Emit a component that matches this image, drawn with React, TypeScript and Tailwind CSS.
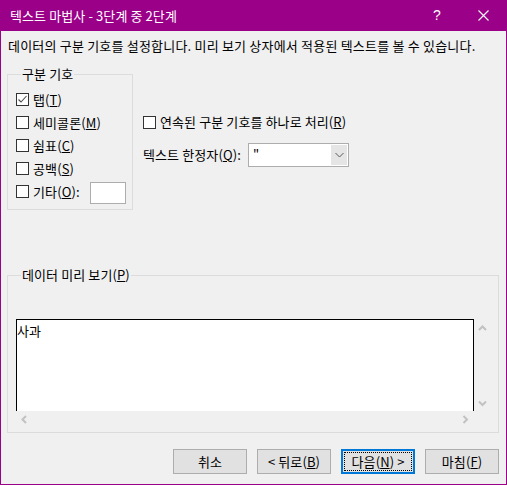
import type { ReactNode } from 'react';

const FONT = "font-['Noto_Sans_CJK_KR','Malgun_Gothic',sans-serif]";

function Check({ checked = false }: { checked?: boolean }) {
  return (
    <span className="w-[13px] h-[13px] border border-[#333333] bg-white flex items-center justify-center shrink-0">
      {checked && (
        <svg width="11" height="11" viewBox="0 0 11 11">
          <polyline points="1.5,5.5 4,8 9.5,2" fill="none" stroke="#4d4d4d" strokeWidth="1.1" />
        </svg>
      )}
    </span>
  );
}

function Key({ k }: { k: string }) {
  return (
    <>
      (<u className="underline-offset-[1px]">{k}</u>)
    </>
  );
}

function CheckRow({ children, checked }: { children: ReactNode; checked?: boolean }) {
  return (
    <div className="flex items-center gap-[4px] h-[23px]">
      <Check checked={checked} />
      <span className="leading-[16px]">{children}</span>
    </div>
  );
}

function Chevron({ dir }: { dir: 'up' | 'down' | 'left' | 'right' }) {
  const pts = {
    up: '1,6 4.5,2.5 8,6',
    down: '1,2.5 4.5,6 8,2.5',
    left: '6,1 2.5,4.5 6,8',
    right: '2.5,1 6,4.5 2.5,8',
  }[dir];
  return (
    <svg width="9" height="9" viewBox="0 0 9 9">
      <polyline points={pts} fill="none" stroke="#c2c2c2" strokeWidth="2" />
    </svg>
  );
}

function Button({ children, focused }: { children: ReactNode; focused?: boolean }) {
  if (focused) {
    return (
      <div className="w-[74px] h-[25px] border-2 border-[#0078d7] bg-[#e1e1e1] p-[1px]">
        <div className="h-full border border-dotted border-black flex items-center justify-center leading-[16px]">
          {children}
        </div>
      </div>
    );
  }
  return (
    <div className="w-[74px] h-[25px] border border-[#adadad] bg-[#e1e1e1] flex items-center justify-center leading-[16px]">
      {children}
    </div>
  );
}

export default function App() {
  return (
    <div className={`w-[507px] h-[485px] flex flex-col bg-[#f0f0f0] text-[13px] tracking-[0.1px] text-black ${FONT}`}>
      {/* Title bar */}
      <div className="h-[31px] bg-[#9b0088] flex items-center text-white shrink-0">
        <span className="pl-[10px] leading-[16px]">텍스트 마법사 - 3단계 중 2단계</span>
        <span className="ml-auto w-[20px] text-center text-[14px] font-['Liberation_Sans',sans-serif] mr-[26px]">?</span>
        <span className="w-[20px] flex justify-center mr-[14px]">
          <svg width="11" height="11" viewBox="0 0 11 11">
            <path d="M0.5 0.5 L10.5 10.5 M10.5 0.5 L0.5 10.5" stroke="white" strokeWidth="1.1" />
          </svg>
        </span>
      </div>

      {/* Body */}
      <div className="flex-1 flex flex-col border-x border-b border-[#9b0088] pl-[6px] pr-[6px]">
        <p className="mt-[7px] pl-[1px] leading-[16px] tracking-[0.2px]">
          데이터의 구분 기호를 설정합니다. 미리 보기 상자에서 적용된 텍스트를 볼 수 있습니다.
        </p>

        <div className="flex mt-[12px]">
          <fieldset className="w-[126px] border border-[#dcdcdc] pl-[8px] pr-[6px] pt-[6px] pb-[6px]">
            <legend className="ml-[5px] px-[1px] leading-[16px]">구분 기호</legend>
            <CheckRow checked>
              탭<Key k="T" />
            </CheckRow>
            <CheckRow>
              세미콜론<Key k="M" />
            </CheckRow>
            <CheckRow>
              쉼표<Key k="C" />
            </CheckRow>
            <CheckRow>
              공백<Key k="S" />
            </CheckRow>
            <div className="flex items-center h-[23px]">
              <Check />
              <span className="ml-[4px] leading-[16px]">
                기타<Key k="O" />:
              </span>
              <div className="ml-auto w-[36px] h-[22px] border border-[#adadad] bg-white mt-[3px]" />
            </div>
          </fieldset>

          <div className="ml-[10px] pt-[48px] flex flex-col">
            <div className="flex items-center gap-[4px] h-[16px]">
              <Check />
              <span className="leading-[16px]">
                연속된 구분 기호를 하나로 처리<Key k="R" />
              </span>
            </div>
            <div className="flex items-center mt-[13px]">
              <span className="w-[105px] leading-[16px]">
                텍스트 한정자<Key k="Q" />:
              </span>
              <div className="w-[101px] h-[24px] border border-[#adadad] bg-white flex">
                <span className="flex-1 pl-[4px] leading-[20px]">"</span>
                <div className="w-[16px] m-[1px] bg-[#e5e5e5] flex items-center justify-center">
                  <svg width="9" height="6" viewBox="0 0 9 6">
                    <polyline points="0.5,1 4.5,5 8.5,1" fill="none" stroke="#5a5a5a" strokeWidth="1" />
                  </svg>
                </div>
              </div>
            </div>
          </div>
        </div>

        <fieldset className="mt-[57px] w-[492px] border border-[#dcdcdc] pl-[8px] pt-[36px] pb-[4px]">
          <legend className="ml-[5px] px-[1px] leading-[16px]">
            데이터 미리 보기<Key k="P" />
          </legend>
          <div className="grid grid-cols-[458px_17px] grid-rows-[92px_17px]">
            <div className="bg-white border-t border-x border-black leading-[16px] pt-[3px]">사과</div>
            <div className="flex flex-col items-center justify-between pt-[5px] pb-[3px]">
              <Chevron dir="up" />
              <Chevron dir="down" />
            </div>
            <div className="flex items-center justify-between px-[4px]">
              <Chevron dir="left" />
              <Chevron dir="right" />
            </div>
            <div />
          </div>
        </fieldset>

        <div className="mt-[16px] flex justify-end gap-[10px] pr-[1px]">
          <Button>취소</Button>
          <Button>
            &lt; 뒤로<Key k="B" />
          </Button>
          <Button focused>
            다음<Key k="N" /> &gt;
          </Button>
          <Button>
            마침<Key k="F" />
          </Button>
        </div>
      </div>
    </div>
  );
}
